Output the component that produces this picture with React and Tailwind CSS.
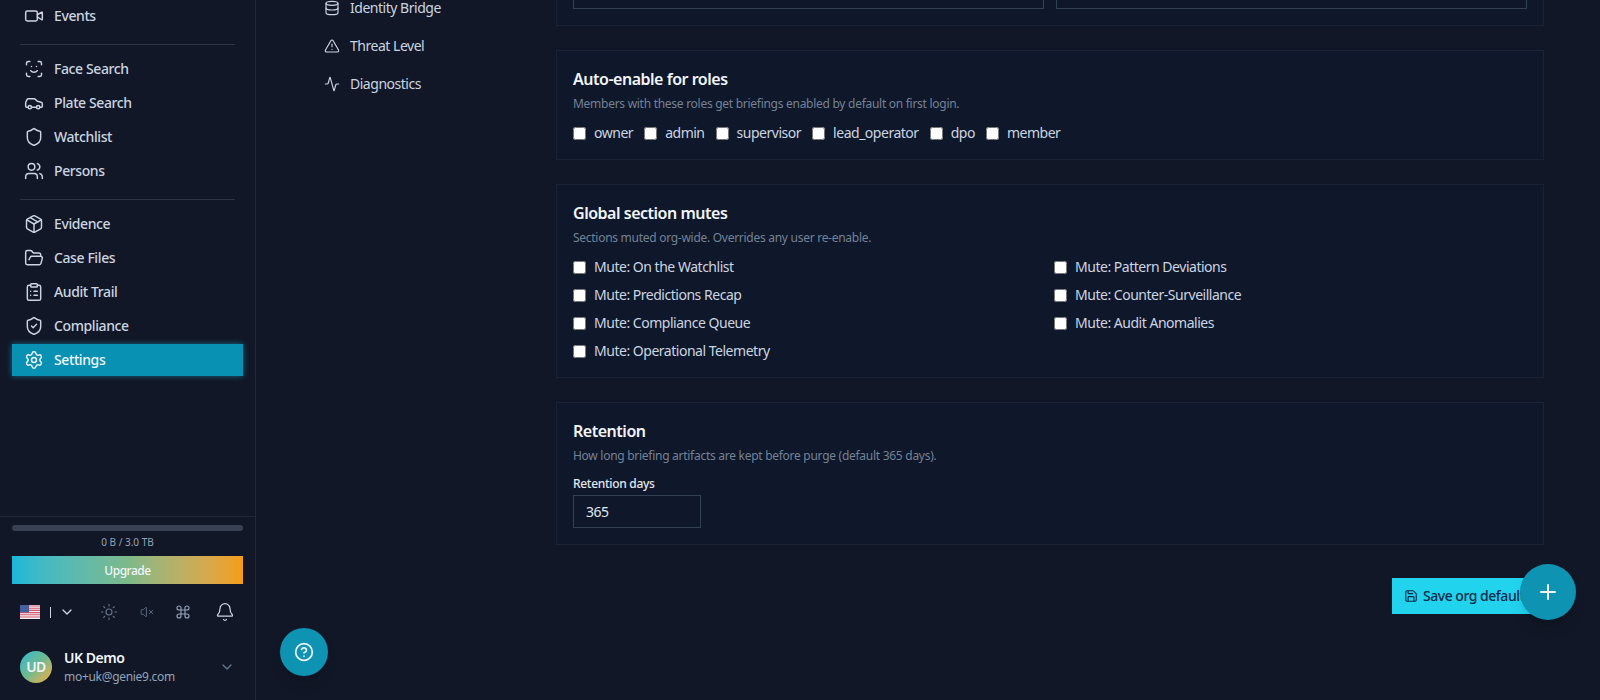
import React from "react";
import {
  Video, ScanFace, Car, Shield, Users, Package, FolderOpen, ClipboardList, ShieldCheck,
  Settings, Database, TriangleAlert, Activity, Sun, VolumeX, Command, Bell, ChevronDown,
  CircleHelp, Plus, Save,
} from "lucide-react";

const navGroups = [
  [{ icon: Video, label: "Events" }],
  [
    { icon: ScanFace, label: "Face Search" },
    { icon: Car, label: "Plate Search" },
    { icon: Shield, label: "Watchlist" },
    { icon: Users, label: "Persons" },
  ],
  [
    { icon: Package, label: "Evidence" },
    { icon: FolderOpen, label: "Case Files" },
    { icon: ClipboardList, label: "Audit Trail" },
    { icon: ShieldCheck, label: "Compliance" },
    { icon: Settings, label: "Settings", active: true },
  ],
];

const subNav = [
  { icon: Database, label: "Identity Bridge" },
  { icon: TriangleAlert, label: "Threat Level" },
  { icon: Activity, label: "Diagnostics" },
];

const roles = ["owner", "admin", "supervisor", "lead_operator", "dpo", "member"];

const mutes = [
  "Mute: On the Watchlist",
  "Mute: Pattern Deviations",
  "Mute: Predictions Recap",
  "Mute: Counter-Surveillance",
  "Mute: Compliance Queue",
  "Mute: Audit Anomalies",
  "Mute: Operational Telemetry",
];

const UsFlag = () => (
  <svg width="20" height="14" viewBox="0 0 20 14">
    <rect width="20" height="14" fill="#f1f1f4" />
    <path d="M0 1h20M0 3.2h20M0 5.4h20M0 7.6h20M0 9.8h20M0 12h20" stroke="#d9546a" strokeWidth="1.1" />
    <rect width="9" height="7.4" fill="#4a5f9e" />
  </svg>
);

const Check = ({ label }) => (
  <label className="flex h-5 items-center gap-2 text-sm text-[#cbd5e1]">
    <input type="checkbox" className="m-0 h-[13px] w-[13px]" />
    {label}
  </label>
);

const Card = ({ title, desc, children }) => (
  <section className="border border-[#1a2335] bg-[#0f172a] p-4">
    <h3 className="text-base leading-6 font-semibold text-[#f1f5f9]">{title}</h3>
    <p className="mt-[5px] text-xs tracking-[-0.023em] text-[#748296]">{desc}</p>
    {children}
  </section>
);

const App = () => {
  return (
    <div className="relative flex h-[700px] w-[1600px] overflow-hidden bg-[#111726] font-['Noto_Sans',sans-serif] tracking-[-0.03em]">
      {/* main sidebar */}
      <aside className="flex h-full w-[256px] shrink-0 flex-col border-r border-[#1f2937] bg-[#111726]">
        <nav className="flex-1 px-3 tracking-[-0.025em]">
          {navGroups.map((group, i) => (
            <div key={i}>
              {i > 0 && <div className="mx-2 mt-3 mb-2 h-px bg-[#2b3445]" />}
              <div className="flex flex-col gap-0.5">
                {group.map((item) => (
                  <a
                    key={item.label}
                    className={
                      item.active
                        ? "flex h-8 items-center gap-2.5 bg-[#0891b2] px-3 text-sm font-medium text-[#f1f5f9] shadow-[0_0_6px_rgba(34,211,238,0.45)]"
                        : "flex h-8 items-center gap-2.5 px-3 text-sm font-medium text-[#cbd5e1]"
                    }
                  >
                    <item.icon size={20} strokeWidth={1.75} />
                    {item.label}
                  </a>
                ))}
              </div>
            </div>
          ))}
        </nav>

        <div className="h-[184px] border-t border-[#1f2937]">
          <div className="px-3 pt-2">
            <div className="h-1.5 rounded-full bg-[#374151]" />
            <p className="mt-[3px] mb-[6px] text-center text-[10px] leading-4 tracking-normal text-[#94a3b8]">0 B / 3.0 TB</p>
            <button className="h-7 w-full bg-gradient-to-r from-[#16b8d8] via-[#7cb98a] to-[#f59e0b] pt-0.5 text-xs font-medium text-[#f1f5f9]">
              Upgrade
            </button>
          </div>
          <div className="mt-4 flex h-6 items-center pl-5 text-[#cbd5e1]">
            <UsFlag />
            <span className="ml-2.5 h-[11px] w-px bg-[#cbd5e1]" />
            <ChevronDown size={16} className="ml-2" />
            <Sun size={18} strokeWidth={1.5} className="ml-[25px] text-[#64748b]" />
            <VolumeX size={14} strokeWidth={1.5} className="ml-[22px] text-[#64748b]" />
            <Command size={16} strokeWidth={1.75} className="ml-[21px] text-[#94a3b8]" />
            <Bell size={20} strokeWidth={1.5} className="ml-6 text-[#cbd5e1]" />
          </div>
          <div className="mt-6 flex items-center pl-5">
            <div className="flex h-8 w-8 items-center justify-center rounded-full bg-gradient-to-br from-[#22b8cf] via-[#6fb98f] to-[#f0a81e] text-sm font-semibold text-[#f1f5f9]">
              UD
            </div>
            <div className="ml-3 flex-1">
              <p className="text-sm leading-5 font-semibold text-[#f1f5f9]">UK Demo</p>
              <p className="mt-px text-xs leading-4 tracking-[-0.025em] text-[#94a3b8]">mo+uk@genie9.com</p>
            </div>
            <ChevronDown size={16} className="mr-5 text-[#64748b]" />
          </div>
        </div>
      </aside>

      {/* settings sub nav */}
      <div className="-mt-[4px] flex w-[300px] shrink-0 flex-col gap-[14px] pl-[68px]">
        {subNav.map((item) => (
          <a key={item.label} className="flex h-6 items-center gap-2.5 text-sm text-[#cbd5e1]">
            <item.icon size={16} strokeWidth={1.75} />
            {item.label}
          </a>
        ))}
      </div>

      {/* content */}
      <main className="-mt-[41px] flex w-[988px] shrink-0 flex-col gap-6">
        <section className="grid grid-cols-2 gap-3 border border-[#1a2335] bg-[#0f172a] px-4 pt-4 pb-4">
          <div className="h-[33px] border border-[#334155]" />
          <div className="h-[33px] border border-[#334155]" />
        </section>

        <Card title="Auto-enable for roles" desc="Members with these roles get briefings enabled by default on first login.">
          <div className="mt-[11px] flex gap-[11px]">
            {roles.map((role) => (
              <Check key={role} label={role} />
            ))}
          </div>
        </Card>

        <Card title="Global section mutes" desc="Sections muted org-wide. Overrides any user re-enable.">
          <div className="mt-[11px] grid grid-cols-2 gap-x-2 gap-y-2">
            {mutes.map((mute) => (
              <Check key={mute} label={mute} />
            ))}
          </div>
        </Card>

        <Card title="Retention" desc="How long briefing artifacts are kept before purge (default 365 days).">
          <label className="mt-3 block text-xs font-medium tracking-[-0.025em] text-[#e2e8f0]">Retention days</label>
          <input
            defaultValue="365"
            className="mt-[3px] block h-[33px] w-32 border border-[#334155] bg-transparent px-3 text-sm text-[#e2e8f0]"
          />
        </Card>

        <div className="mt-[9px] flex justify-end">
          <button className="flex h-9 w-[152px] items-center gap-[5px] overflow-hidden whitespace-nowrap bg-[#22d3ee] pl-3 text-sm font-medium text-[#0f2a4a]">
            <Save size={14} />
            Save org defaults
          </button>
        </div>
      </main>

      {/* floating buttons */}
      <button className="absolute bottom-6 left-[280px] flex h-12 w-12 items-center justify-center rounded-full bg-[#0e93b3] text-[#f1f5f9] shadow-lg">
        <CircleHelp size={20} />
      </button>
      <button className="absolute right-6 bottom-20 flex h-14 w-14 items-center justify-center rounded-full bg-[#0e93b3] text-[#f1f5f9] shadow-lg">
        <Plus size={24} />
      </button>
    </div>
  );
};

export default App;
